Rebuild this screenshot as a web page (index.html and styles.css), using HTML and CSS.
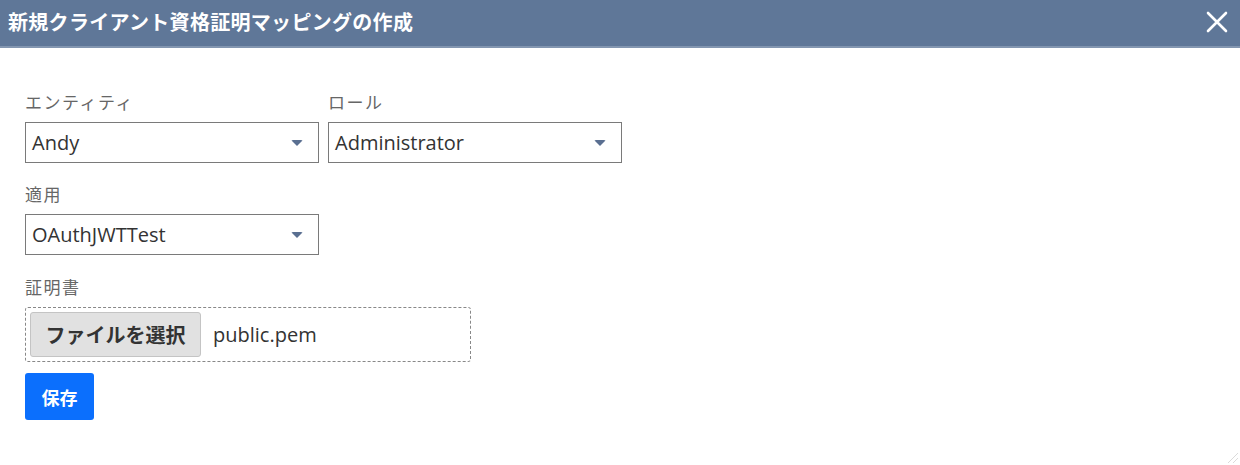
FILE: index.html
```html
<!DOCTYPE html>
<html lang="ja">
<head>
<meta charset="utf-8">
<title>新規クライアント資格証明マッピングの作成</title>
<link rel="stylesheet" href="styles.css">
</head>
<body>
<div class="dialog">
  <div class="header">
    <span class="title">新規クライアント資格証明マッピングの作成</span>
    <svg class="close" width="22" height="22" viewBox="0 0 22 22"><path d="M2 2L20 20M20 2L2 20" stroke="#fff" stroke-width="2.6" stroke-linecap="round"/></svg>
  </div>
  <div class="body">
    <div class="row">
      <div class="field">
        <div class="label">エンティティ</div>
        <div class="select"><span>Andy</span><i class="caret"></i></div>
      </div>
      <div class="field">
        <div class="label">ロール</div>
        <div class="select"><span>Administrator</span><i class="caret"></i></div>
      </div>
    </div>
    <div class="field">
      <div class="label">適用</div>
      <div class="select"><span>OAuthJWTTest</span><i class="caret"></i></div>
    </div>
    <div class="field cert">
      <div class="label">証明書</div>
      <div class="filebox">
        <span class="filebtn">ファイルを選択</span>
        <span class="filename">public.pem</span>
      </div>
    </div>
    <button class="save">保存</button>
  </div>
  <div class="grip"></div>
</div>
</body>
</html>
```
FILE: styles.css
```css
html, body {
  margin: 0;
  padding: 0;
  background: #fff;
}
body {
  font-family: "Open Sans", "Noto Sans CJK JP", sans-serif;
  color: #333;
  width: 1240px;
  height: 465px;
  overflow: hidden;
}
.dialog {
  position: relative;
  width: 1240px;
  height: 465px;
}
.header {
  height: 46px;
  background: #5f7798;
  border-bottom: 2px solid #8396b0;
  display: flex;
  align-items: center;
  justify-content: space-between;
  padding: 0 12px 0 8px;
}
.title {
  color: #fff;
  font-family: "Noto Sans CJK JP", sans-serif;
  font-weight: 700;
  font-size: 20px;
  letter-spacing: 0.3px;
  margin-top: -3px;
}
.close {
  margin-top: -3px;
}
.body {
  padding: 44px 25px 0;
  display: flex;
  flex-direction: column;
  align-items: flex-start;
}
.row {
  display: flex;
  gap: 9px;
}
.field {
  display: flex;
  flex-direction: column;
}
.label {
  font-family: "Noto Sans CJK JP", sans-serif;
  font-size: 17px;
  letter-spacing: 1.5px;
  color: #666;
  line-height: 24px;
  height: 30px;
  margin-top: -2px;
  margin-bottom: 2px;
}
.select {
  box-sizing: border-box;
  width: 294px;
  height: 41px;
  border: 1.5px solid #7a7a7a;
  display: flex;
  align-items: center;
  justify-content: space-between;
  padding: 0 15px 0 6px;
  font-size: 20px;
  color: #333;
  margin-bottom: 21px;
}
.caret {
  width: 0;
  height: 0;
  border-left: 6px solid transparent;
  border-right: 6px solid transparent;
  border-top: 6px solid #5a6f91;
  border-radius: 2px;
}
.cert {
  margin-top: 1px;
}
.filebox {
  box-sizing: border-box;
  width: 446px;
  height: 55px;
  border: 1.5px dashed #888;
  border-radius: 3px;
  display: flex;
  align-items: center;
  padding: 0 4px;
  margin-bottom: 11px;
}
.filebtn {
  box-sizing: border-box;
  height: 45px;
  width: 171px;
  background: #e1e1e1;
  border: 1px solid #c4c4c4;
  border-radius: 3px;
  display: flex;
  align-items: center;
  justify-content: center;
  font-family: "Noto Sans CJK JP", sans-serif;
  font-weight: 700;
  font-size: 20px;
  color: #333;
}
.filename {
  margin-left: 12px;
  font-size: 20px;
  color: #333;
}
.save {
  width: 69px;
  height: 47px;
  background: #0b6ffd;
  color: #fff;
  border: none;
  border-radius: 3px;
  font-family: "Noto Sans CJK JP", sans-serif;
  font-weight: 700;
  font-size: 18px;
  padding: 0;
}
.grip {
  position: absolute;
  right: 2px;
  bottom: 2px;
  width: 10px;
  height: 10px;
  background: linear-gradient(135deg, transparent 45%, #ccc 48%, transparent 55%, transparent 70%, #ccc 73%, transparent 80%);
}
```
